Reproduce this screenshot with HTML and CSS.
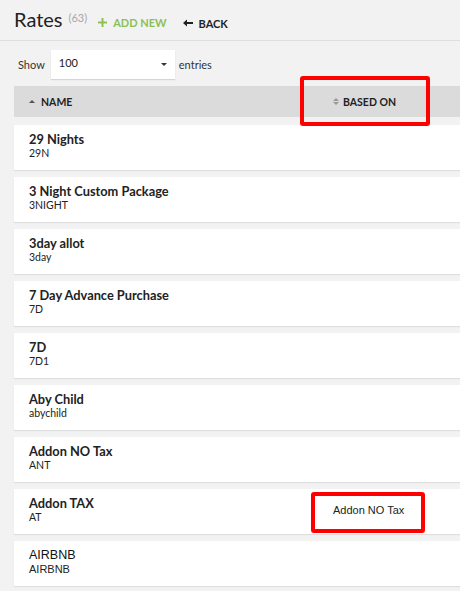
FILE: index.html
```html
<!DOCTYPE html>
<html>
<head>
<meta charset="utf-8">
<link rel="stylesheet" href="styles.css">
</head>
<body>
<div class="page">
  <header class="top">
    <h1 class="title">Rates</h1>
    <span class="count">(63)</span>
    <a class="add">
      <svg width="9" height="9" viewBox="0 0 9 9"><path d="M4.5 0v9M0 4.5h9" stroke="#8cc152" stroke-width="2"/></svg>
      ADD NEW</a>
    <a class="back">
      <svg width="10" height="8" viewBox="0 0 10 8"><path d="M0 4L4 0.5V3H10V5H4V7.5Z" fill="#222"/></svg>
      BACK</a>
  </header>
  <div class="show">
    <span>Show</span>
    <div class="select"><span>100</span><span class="caret"></span></div>
    <span>entries</span>
  </div>
  <div class="thead">
    <div class="th name"><span class="up"></span>NAME</div>
    <div class="th based"><span class="both"><i class="u"></i><i class="d"></i></span>BASED ON</div>
  </div>
  <div class="rows">
    <div class="row"><div class="cell"><div class="nm">29 Nights</div><div class="cd">29N</div></div></div>
    <div class="row"><div class="cell"><div class="nm">3 Night Custom Package</div><div class="cd">3NIGHT</div></div></div>
    <div class="row"><div class="cell"><div class="nm">3day allot</div><div class="cd">3day</div></div></div>
    <div class="row"><div class="cell"><div class="nm">7 Day Advance Purchase</div><div class="cd">7D</div></div></div>
    <div class="row"><div class="cell"><div class="nm">7D</div><div class="cd">7D1</div></div></div>
    <div class="row"><div class="cell"><div class="nm">Aby Child</div><div class="cd">abychild</div></div></div>
    <div class="row"><div class="cell"><div class="nm">Addon NO Tax</div><div class="cd">ANT</div></div></div>
    <div class="row"><div class="cell"><div class="nm">Addon TAX</div><div class="cd">AT</div></div><div class="based-val">Addon NO Tax</div></div>
    <div class="row"><div class="cell arial"><div class="nm">AIRBNB</div><div class="cd">AIRBNB</div></div></div>
  </div>
  <div class="mark mark1"></div>
  <div class="mark mark2"></div>
</div>
</body>
</html>
```
FILE: styles.css
```css
html, body { margin: 0; padding: 0; }
body {
  background: #f2f2f2;
  font-family: "Lato", "Open Sans", sans-serif;
  color: #222;
  width: 460px;
  height: 591px;
  overflow: hidden;
}
.page { position: relative; padding-left: 14px; }
.top {
  display: flex;
  align-items: baseline;
  height: 41px;
  border-bottom: 1px solid #dedede;
  box-sizing: border-box;
  margin-left: -14px;
  padding-left: 14px;
}
.title {
  margin: 0;
  font-weight: 400;
  font-size: 20px;
  line-height: 39px;
  color: #222;
}
.count { font-size: 11px; color: #a8a8a8; margin-left: 6px; position: relative; top: -5px; }
.add {
  margin-left: 11px;
  font-size: 11px;
  font-weight: 700;
  color: #8cc152;
  display: flex; align-items: center; gap: 6px;
}
.back {
  margin-left: 16px;
  font-size: 11px;
  font-weight: 700;
  color: #222;
  display: flex; align-items: center; gap: 6px;
}
.show {
  display: flex;
  align-items: center;
  height: 30px;
  margin-top: 8px;
  font-size: 11px;
  color: #333;
  padding-left: 4px;
}
.select {
  margin-left: 6px;
  margin-right: 4px;
  width: 124px;
  height: 29px;
  background: #fff;
  box-shadow: 0 1px 1px rgba(0,0,0,0.12);
  box-sizing: border-box;
  padding: 0 8px;
  display: flex;
  align-items: center;
  justify-content: space-between;
  font-size: 11px;
  color: #222;
}
.select span:first-child { position: relative; top: -2px; }
.caret { width: 0; height: 0; border-left: 3px solid transparent; border-right: 3px solid transparent; border-top: 3px solid #333; }
.thead {
  margin-top: 7px;
  height: 31px;
  background: #dbdbdb;
  display: flex;
  align-items: center;
  font-size: 10.5px;
  font-weight: 700;
  color: #222;
}
.th { display: flex; align-items: center; }
.th.name { padding-left: 15px; width: 304px; }
.up { width: 0; height: 0; border-left: 3px solid transparent; border-right: 3px solid transparent; border-bottom: 3px solid #555; margin-right: 6px; }
.both { display: flex; flex-direction: column; gap: 1px; margin-right: 4px; }
.both i { width: 0; height: 0; border-left: 3px solid transparent; border-right: 3px solid transparent; }
.both .u { border-bottom: 3px solid #999; }
.both .d { border-top: 3px solid #999; }
.rows { margin-top: 8px; display: flex; flex-direction: column; gap: 7px; }
.row {
  height: 45px;
  background: #fff;
  box-shadow: 0 1px 1px rgba(0,0,0,0.08);
  display: flex;
  align-items: center;
}
.cell { padding-left: 15px; width: 304px; margin-top: -3px; }
.nm { font-size: 12.8px; font-weight: 700; color: #222; line-height: 15px; }
.cd { font-size: 10.5px; color: #222; line-height: 13px; }
.arial .nm { font-family: "Liberation Sans", Arial, sans-serif; font-size: 12.5px; font-weight: 400; color: #111; }
.arial .cd { font-family: "Liberation Sans", Arial, sans-serif; font-size: 11px; }
.based-val {
  font-family: "Liberation Sans", Arial, sans-serif;
  font-size: 11px;
  color: #222;
  position: relative;
  top: -2px;
}
.mark {
  position: absolute;
  border: 4px solid #f00;
  border-radius: 3px;
  box-sizing: border-box;
}
.mark1 { left: 300px; top: 76px; width: 130px; height: 50px; }
.mark2 { left: 311px; top: 492px; width: 114px; height: 41px; }
```
